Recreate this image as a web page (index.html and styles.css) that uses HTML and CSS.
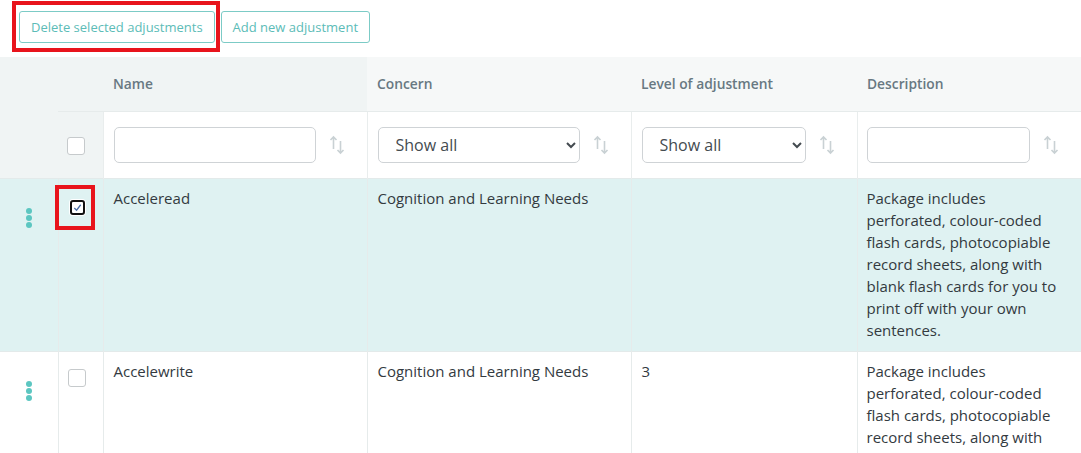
FILE: index.html
```html
<!DOCTYPE html>
<html lang="en">
<head>
<meta charset="utf-8">
<title>Adjustments</title>
<link rel="stylesheet" href="styles.css">
</head>
<body>
<div class="toolbar">
  <span class="annot-wrap"><button class="btn">Delete selected adjustments</button></span>
  <button class="btn">Add new adjustment</button>
</div>
<table class="grid">
  <colgroup>
    <col class="c-menu"><col class="c-check"><col class="c-name"><col class="c-concern"><col class="c-level"><col class="c-desc">
  </colgroup>
  <thead>
    <tr class="head-row">
      <th class="grey" rowspan="2"></th>
      <th class="grey"></th>
      <th class="grey">Name</th>
      <th>Concern</th>
      <th>Level of adjustment</th>
      <th>Description</th>
    </tr>
    <tr class="filter-row">
      <td class="grey chk-cell"><span class="cb"></span></td>
      <td><div class="filter"><input class="field" type="text"><svg class="sort" viewBox="0 0 16 22" width="16" height="22"><path d="M4.5 15V3M1.5 6l3-3 3 3M11.5 7v12M8.5 16l3 3 3-3" fill="none" stroke="#c9d1d4" stroke-width="1.6"/></svg></div></td>
      <td><div class="filter"><select class="field sel"><option>Show all</option></select><svg class="sort" viewBox="0 0 16 22" width="16" height="22"><path d="M4.5 15V3M1.5 6l3-3 3 3M11.5 7v12M8.5 16l3 3 3-3" fill="none" stroke="#c9d1d4" stroke-width="1.6"/></svg></div></td>
      <td><div class="filter"><select class="field sel"><option>Show all</option></select><svg class="sort" viewBox="0 0 16 22" width="16" height="22"><path d="M4.5 15V3M1.5 6l3-3 3 3M11.5 7v12M8.5 16l3 3 3-3" fill="none" stroke="#c9d1d4" stroke-width="1.6"/></svg></div></td>
      <td class="desc-pad"><div class="filter"><input class="field" type="text"><svg class="sort" viewBox="0 0 16 22" width="16" height="22"><path d="M4.5 15V3M1.5 6l3-3 3 3M11.5 7v12M8.5 16l3 3 3-3" fill="none" stroke="#c9d1d4" stroke-width="1.6"/></svg></div></td>
    </tr>
  </thead>
  <tbody>
    <tr class="row selected">
      <td class="menu-cell"><span class="kebab"><i></i><i></i><i></i></span></td>
      <td class="chk-cell annot-cell"><span class="cb checked"><svg viewBox="0 0 12 12" width="11" height="11"><path d="M2.5 6.5l2.5 2.5 4.5-6" fill="none" stroke="#4a6fa8" stroke-width="1.4"/></svg></span></td>
      <td>Acceleread</td>
      <td>Cognition and Learning Needs</td>
      <td></td>
      <td class="desc-pad">Package includes perforated, colour-coded flash cards, photocopiable record sheets, along with blank flash cards for you to print off with your own sentences.</td>
    </tr>
    <tr class="row">
      <td class="menu-cell"><span class="kebab"><i></i><i></i><i></i></span></td>
      <td class="chk-cell"><span class="cb"></span></td>
      <td>Accelewrite</td>
      <td>Cognition and Learning Needs</td>
      <td>3</td>
      <td class="desc-pad">Package includes perforated, colour-coded flash cards, photocopiable record sheets, along with blank flash cards for you to print off with your own sentences.</td>
    </tr>
  </tbody>
</table>
</body>
</html>
```
FILE: styles.css
```css
html, body {
  margin: 0;
  padding: 0;
  background: #ffffff;
  font-family: "Open Sans", "Liberation Sans", sans-serif;
  color: #333a3f;
  overflow: hidden;
}

.toolbar {
  display: flex;
  gap: 6px;
  padding: 11px 0 0 19px;
  height: 32px;
  margin-bottom: 14px;
}

.annot-wrap {
  position: relative;
  display: inline-flex;
}

.annot-wrap::after {
  content: "";
  position: absolute;
  left: -7px;
  top: -10px;
  right: -5px;
  bottom: -9px;
  border: 4px solid #e8141c;
  pointer-events: none;
}

.btn {
  height: 32px;
  padding: 0 11px;
  background: #ffffff;
  border: 1px solid #7ccbc6;
  border-radius: 3px;
  color: #5cbcb7;
  font-family: "Open Sans", "Liberation Sans", sans-serif;
  font-size: 13px;
}

.grid {
  width: 1081px;
  border-collapse: collapse;
  table-layout: fixed;
}

.c-menu { width: 58px; }
.c-check { width: 45px; }
.c-name { width: 264px; }
.c-concern { width: 264px; }
.c-level { width: 226px; }
.c-desc { width: 224px; }

.head-row th {
  height: 54px;
  padding: 0 10px;
  box-sizing: border-box;
  text-align: left;
  font-size: 13.8px;
  font-weight: 600;
  color: #687882;
  background: #f6f8f8;
}

.head-row th.grey,
.filter-row td.grey {
  background: #f0f4f4;
}

.filter-row td {
  height: 66px;
  padding: 0 22px 0 10px;
  border-top: 1px solid #e6ebeb;
  border-left: 1px solid #e9eded;
  background: #ffffff;
}

.filter-row td.chk-cell {
  padding: 0;
  border-left: none;
}

.filter-row td.desc-pad { padding-left: 9px; }

.filter {
  display: flex;
  align-items: center;
  gap: 13px;
}

.field {
  flex: 1;
  min-width: 0;
  height: 36px;
  box-sizing: border-box;
  border: 1px solid #cfd3d6;
  border-radius: 5px;
  background: #ffffff;
  font-family: "Open Sans", "Liberation Sans", sans-serif;
  font-size: 14px;
  color: #444b50;
}

.sel {
  padding: 0 10px 0 13px;
  font-size: 16px;
}

.sort {
  flex: none;
  display: block;
}

.chk-cell {
  text-align: left;
  vertical-align: middle;
}

.cb {
  display: inline-block;
  box-sizing: border-box;
  width: 18px;
  height: 18px;
  margin-left: 9px;
  border: 1px solid #c6cacc;
  border-radius: 3px;
  background: #ffffff;
  vertical-align: middle;
}

.row td {
  padding: 8px 10px 10px;
  vertical-align: top;
  font-size: 15px;
  line-height: 22px;
  border-left: 1px solid #e6ebeb;
  border-top: 1px solid #e3eaea;
}

.row td.desc-pad { padding: 8px 18px 10px 9px; }

.row td.menu-cell {
  border-left: none;
  padding: 18px 0 0 0;
  text-align: center;
}

.row td.chk-cell {
  padding: 8px 0 0 0;
  vertical-align: top;
}

.selected td { background: #dff2f2; }

.annot-cell { position: relative; }

.annot-cell::after {
  content: "";
  position: absolute;
  left: -4px;
  top: 6px;
  width: 32px;
  height: 37px;
  border: 4px solid #e8141c;
}

.cb.checked {
  width: 15px;
  height: 15px;
  margin: 13px 0 0 11px;
  border: 2px solid #111111;
  border-radius: 3px;
  display: inline-flex;
  align-items: center;
  justify-content: center;
  box-shadow: 0 0 0 1px #ffffff;
}

.row .cb:not(.checked) { margin-top: 9px; }

.kebab {
  display: inline-flex;
  flex-direction: column;
  gap: 1px;
}

.kebab i {
  display: block;
  width: 6px;
  height: 6px;
  border-radius: 50%;
  background: #5cc6c1;
}
```
